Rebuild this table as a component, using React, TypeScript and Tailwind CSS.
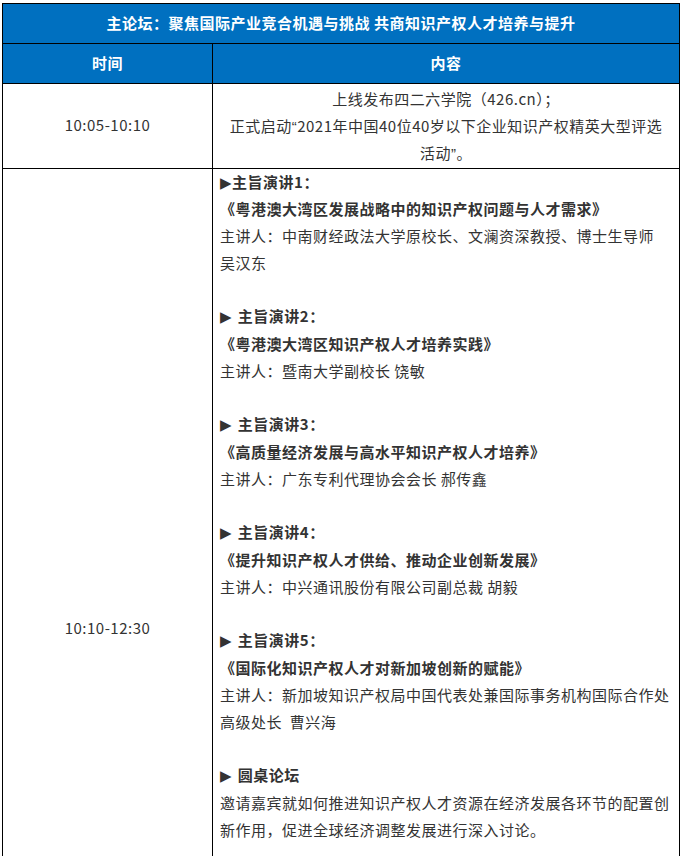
import React from "react";

const font = { fontFamily: '"Noto Sans CJK SC", "Noto Sans", sans-serif' };

function Tri({ space }: { space?: boolean }) {
  return (
    <span className="font-[DejaVu_Sans] font-bold">
      {"▶"}
      {space ? " " : ""}
    </span>
  );
}

function Q({ c }: { c: string }) {
  return <span className="font-[Liberation_Sans]">{c}</span>;
}

type Talk = { head: string; space: boolean; title?: string; lines: string[] };

const talks: Talk[] = [
  {
    head: "主旨演讲1：",
    space: false,
    title: "《粤港澳大湾区发展战略中的知识产权问题与人才需求》",
    lines: ["主讲人：中南财经政法大学原校长、文澜资深教授、博士生导师", "吴汉东"],
  },
  {
    head: "主旨演讲2：",
    space: true,
    title: "《粤港澳大湾区知识产权人才培养实践》",
    lines: ["主讲人：暨南大学副校长 饶敏"],
  },
  {
    head: "主旨演讲3：",
    space: true,
    title: "《高质量经济发展与高水平知识产权人才培养》",
    lines: ["主讲人：广东专利代理协会会长 郝传鑫"],
  },
  {
    head: "主旨演讲4：",
    space: true,
    title: "《提升知识产权人才供给、推动企业创新发展》",
    lines: ["主讲人：中兴通讯股份有限公司副总裁 胡毅"],
  },
  {
    head: "主旨演讲5：",
    space: true,
    title: "《国际化知识产权人才对新加坡创新的赋能》",
    lines: ["主讲人：新加坡知识产权局中国代表处兼国际事务机构国际合作处", "高级处长\u00a0\u00a0曹兴海"],
  },
  {
    head: "圆桌论坛",
    space: true,
    lines: ["邀请嘉宾就如何推进知识产权人才资源在经济发展各环节的配置创", "新作用，促进全球经济调整发展进行深入讨论。"],
  },
];

export default function App() {
  return (
    <div className="bg-white w-[681px] h-[856px] overflow-hidden pt-[3px] pl-[2px]" style={font}>
      <table className="table-fixed border-collapse w-[677px] text-[15px] tracking-[0.5px] text-[#333333] leading-[26.75px]">
        <colgroup>
          <col className="w-[210px]" />
          <col className="w-[467px]" />
        </colgroup>
        <tbody>
          <tr className="h-[40px]">
            <td colSpan={2} className="border border-black bg-[#0070c0] text-white font-bold text-center align-middle">
              主论坛：聚焦国际产业竞合机遇与挑战 共商知识产权人才培养与提升
            </td>
          </tr>
          <tr className="h-[40px]">
            <td className="border border-black bg-[#0070c0] text-white font-bold text-center align-middle">时间</td>
            <td className="border border-black bg-[#0070c0] text-white font-bold text-center align-middle">内容</td>
          </tr>
          <tr>
            <td className="border border-black text-center align-middle">10:05-10:10</td>
            <td className="border border-black text-center align-top pt-[2px] pb-0 px-[6px] leading-[26.5px]">
              <div>上线发布四二六学院（426.cn）；</div>
              <div>
                正式启动<Q c="“" />2021年中国40位40岁以下企业知识产权精英大型评选
              </div>
              <div>
                活动<Q c="”" />。
              </div>
            </td>
          </tr>
          <tr className="h-[920px]">
            <td className="border border-black text-center align-middle">10:10-12:30</td>
            <td className="border border-black align-top pt-0 pl-[7px] pr-[4px]">
              {talks.map((t, i) => (
                <div key={i} className="mb-[26.75px]">
                  <div className="font-bold">
                    <Tri space={t.space} />
                    {t.head}
                  </div>
                  {t.title && <div className="font-bold whitespace-nowrap">{t.title}</div>}
                  {t.lines.map((l, j) => (
                    <div key={j} className="whitespace-nowrap">
                      {l}
                    </div>
                  ))}
                </div>
              ))}
            </td>
          </tr>
        </tbody>
      </table>
    </div>
  );
}
